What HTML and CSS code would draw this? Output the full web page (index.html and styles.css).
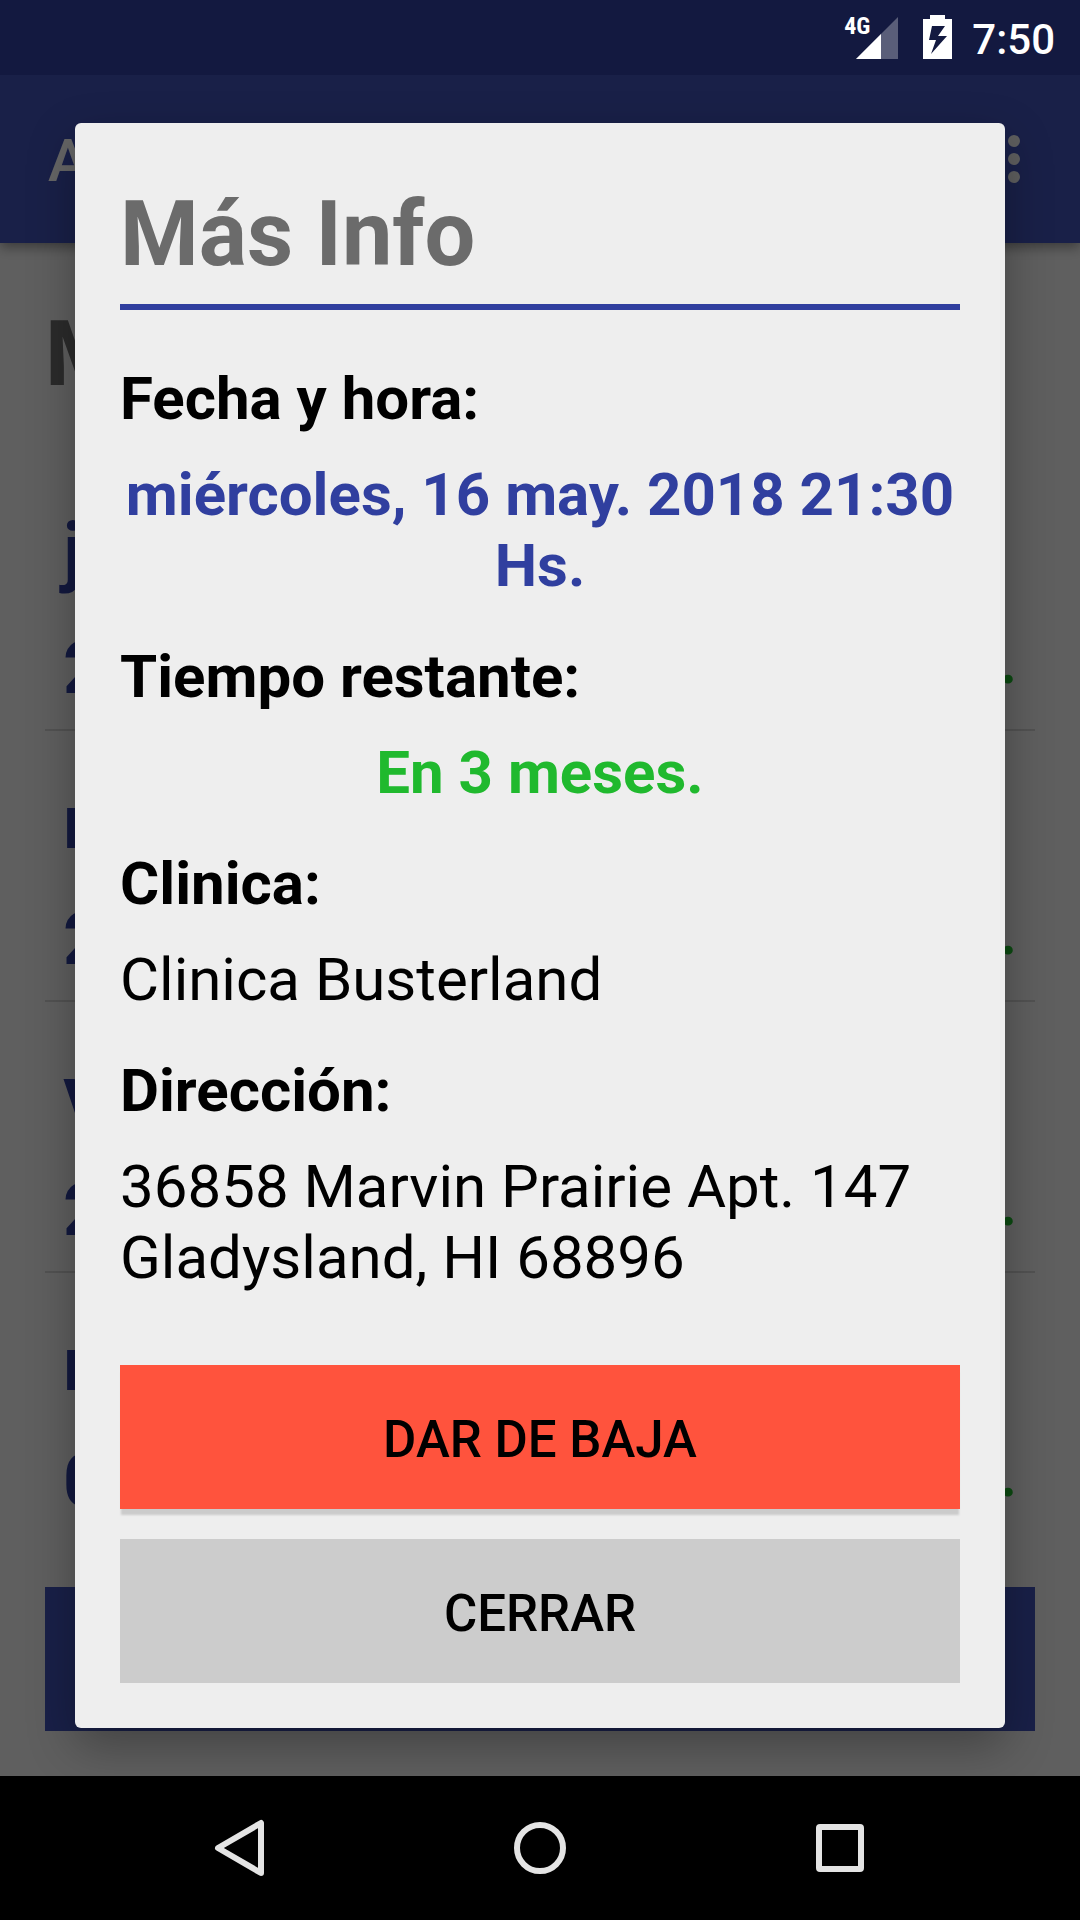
FILE: index.html
```html
<!DOCTYPE html>
<html lang="es">
<head>
<meta charset="utf-8">
<meta name="viewport" content="width=device-width, initial-scale=1">
<title>Más Info</title>
<link rel="stylesheet" href="styles.css">
</head>
<body>
<div class="device">
  <header class="status-bar">
    <div class="signal">
      <span class="network">4G</span>
      <svg class="signal-icon" viewBox="0 0 42 42" aria-hidden="true"><path d="M0 42L42 0V42Z" fill="#fff" fill-opacity=".3"/><path d="M0 42L25 17V42Z" fill="#fff"/></svg>
    </div>
    <svg class="battery" viewBox="0 0 29 44" aria-hidden="true"><path fill="#fff" fill-rule="evenodd" d="M7 0H22V4H29V44H0V4H7ZM9 11L6 25H13L8 39L24 21H15L22 11Z"/></svg>
    <time class="clock">7:50</time>
  </header>

  <div class="stage">
    <div class="app" aria-hidden="true">
      <div class="app-bar">
        <span class="app-name">A</span>
        <svg class="more" viewBox="0 0 12 48"><circle cx="6" cy="6" r="6"/><circle cx="6" cy="24" r="6"/><circle cx="6" cy="42" r="6"/></svg>
      </div>
      <div class="page">
        <div class="page-title">M</div>
        <ul class="list">
          <li class="row"><div class="day">j</div><div class="when"><span class="date">2</span><span class="left">.</span></div></li>
          <li class="row"><div class="day">m</div><div class="when"><span class="date">2</span><span class="left">.</span></div></li>
          <li class="row"><div class="day">v</div><div class="when"><span class="date">2</span><span class="left">.</span></div></li>
          <li class="row"><div class="day">m</div><div class="when"><span class="date">0</span><span class="left">.</span></div></li>
        </ul>
        <div class="page-action"></div>
      </div>
    </div>

    <div class="scrim">
      <section class="dialog" role="dialog" aria-modal="true" aria-labelledby="dialog-title">
        <h1 class="dialog-title" id="dialog-title">Más Info</h1>
        <dl class="details">
          <div class="detail"><dt>Fecha y hora:</dt><dd class="date-value">miércoles, 16 may. 2018 21:30 Hs.</dd></div>
          <div class="detail"><dt>Tiempo restante:</dt><dd class="time-value">En 3 meses.</dd></div>
          <div class="detail"><dt>Clinica:</dt><dd>Clinica Busterland</dd></div>
          <div class="detail"><dt>Dirección:</dt><dd>36858 Marvin Prairie Apt. 147<br>Gladysland, HI 68896</dd></div>
        </dl>
        <div class="actions">
          <button class="button danger" type="button">DAR DE BAJA</button>
          <button class="button" type="button">CERRAR</button>
        </div>
      </section>
    </div>
  </div>

  <nav class="nav-bar">
    <button class="nav-button" type="button" aria-label="Atrás"><svg viewBox="0 0 60 60"><path d="M51 5V55L8 30Z"/></svg></button>
    <button class="nav-button" type="button" aria-label="Inicio"><svg viewBox="0 0 60 60"><circle cx="30" cy="30" r="23"/></svg></button>
    <button class="nav-button" type="button" aria-label="Recientes"><svg viewBox="0 0 60 60"><rect x="9" y="9" width="42" height="42" rx="1"/></svg></button>
  </nav>
</div>
</body>
</html>
```
FILE: styles.css
```css
* {
  box-sizing: border-box;
}

body {
  margin: 0;
  background: #000;
  font-family: Roboto, "Liberation Sans", sans-serif;
}

.device {
  display: flex;
  flex-direction: column;
  min-height: 100vh;
}

/* System status bar */
.status-bar {
  display: flex;
  align-items: flex-start;
  height: 75px;
  padding: 15px 25px 0 0;
  justify-content: flex-end;
  background: #131940;
  color: #fff;
}

.signal {
  display: flex;
  align-items: flex-start;
  padding-top: 2px;
  margin-right: 25px;
}

.network {
  margin-right: -14px;
  font-family: "Roboto Condensed", "Liberation Sans Narrow", Roboto, sans-serif;
  font-size: 24px;
  font-weight: 700;
  line-height: 18px;
}

.signal-icon {
  width: 42px;
  height: 42px;
}

.battery {
  width: 29px;
  height: 44px;
  margin-right: 20px;
}

.clock {
  font-size: 42px;
  font-weight: 500;
  line-height: 49px;
}

/* App and dialog share the same grid cell */
.stage {
  display: grid;
  grid-template: 1fr / 1fr;
  flex: 1;
  overflow: hidden;
}

.app,
.scrim {
  grid-area: 1 / 1;
}

.app {
  display: flex;
  flex-direction: column;
  background: #eee;
}

.app-bar {
  display: flex;
  align-items: center;
  justify-content: space-between;
  height: 168px;
  padding: 0 60px 0 48px;
  background: #3f51b5;
  box-shadow: 0 4px 12px rgba(0, 0, 0, .4);
  color: #fff;
}

.app-name {
  padding-top: 2px;
  font-size: 60px;
  font-weight: 500;
  line-height: 71px;
}

.more {
  width: 12px;
  height: 48px;
  fill: #eee;
}

.page {
  display: flex;
  flex: 1;
  flex-direction: column;
  padding: 59px 45px 45px;
}

.page-title {
  margin-bottom: 52px;
  color: #6b6b6b;
  font-size: 90px;
  font-weight: 700;
  line-height: 106px;
}

.list {
  margin: 0;
  padding: 0;
  list-style: none;
}

.row {
  padding: 45px 18px 18px;
  font-weight: 700;
}

.row + .row {
  border-top: 2px solid #ccc;
}

.day {
  margin-bottom: 30px;
  color: #303f9f;
  font-size: 76px;
  line-height: 92px;
}

.when {
  display: flex;
  align-items: center;
  justify-content: space-between;
}

.date {
  color: #303f9f;
  font-size: 72px;
  line-height: 84px;
}

.left {
  padding-bottom: 13px;
  color: #20b92e;
  font-size: 60px;
  line-height: 71px;
}

.page-action {
  height: 144px;
  margin-top: auto;
  background: #3f51b5;
}

.scrim {
  z-index: 1;
  display: grid;
  align-items: center;
  padding: 0 75px;
  background: rgba(0, 0, 0, .6);
}

.dialog {
  padding: 45px;
  border-radius: 6px;
  background: #eee;
  box-shadow: 0 18px 48px rgba(0, 0, 0, .3);
  color: #000;
}

.dialog-title {
  margin: 0 0 53px;
  padding-bottom: 2px;
  border-bottom: 6px solid #303f9f;
  color: #6b6b6b;
  font-size: 90px;
  font-weight: 700;
  line-height: 134px;
}

.details {
  display: grid;
  gap: 40px;
  margin: 0 0 72px;
  font-size: 60px;
  line-height: 71px;
}

.detail {
  display: grid;
  gap: 25px;
}

dt {
  font-weight: 700;
}

dd {
  margin: 0;
}

.date-value,
.time-value {
  font-weight: 700;
  text-align: center;
}

.date-value {
  color: #303f9f;
}

.time-value {
  color: #20b92e;
}

.actions {
  display: grid;
  gap: 30px;
}

.button {
  height: 144px;
  padding: 5px 0 0;
  border: 0;
  background: #ccc;
  color: #000;
  font: 500 51px/60px Roboto, "Liberation Sans", sans-serif;
}

.danger {
  background: #ff533d;
  box-shadow: 0 7px 2px -1px #cbcbcb;
}

/* System navigation */
.nav-bar {
  display: flex;
  justify-content: center;
  height: 144px;
  background: #000;
}

.nav-button {
  display: grid;
  place-items: center;
  width: 300px;
  padding: 0;
  border: 0;
  background: none;
}

.nav-button svg {
  width: 60px;
  height: 60px;
  fill: none;
  stroke: #e4e4e4;
  stroke-width: 6px;
  stroke-linejoin: round;
}
```
